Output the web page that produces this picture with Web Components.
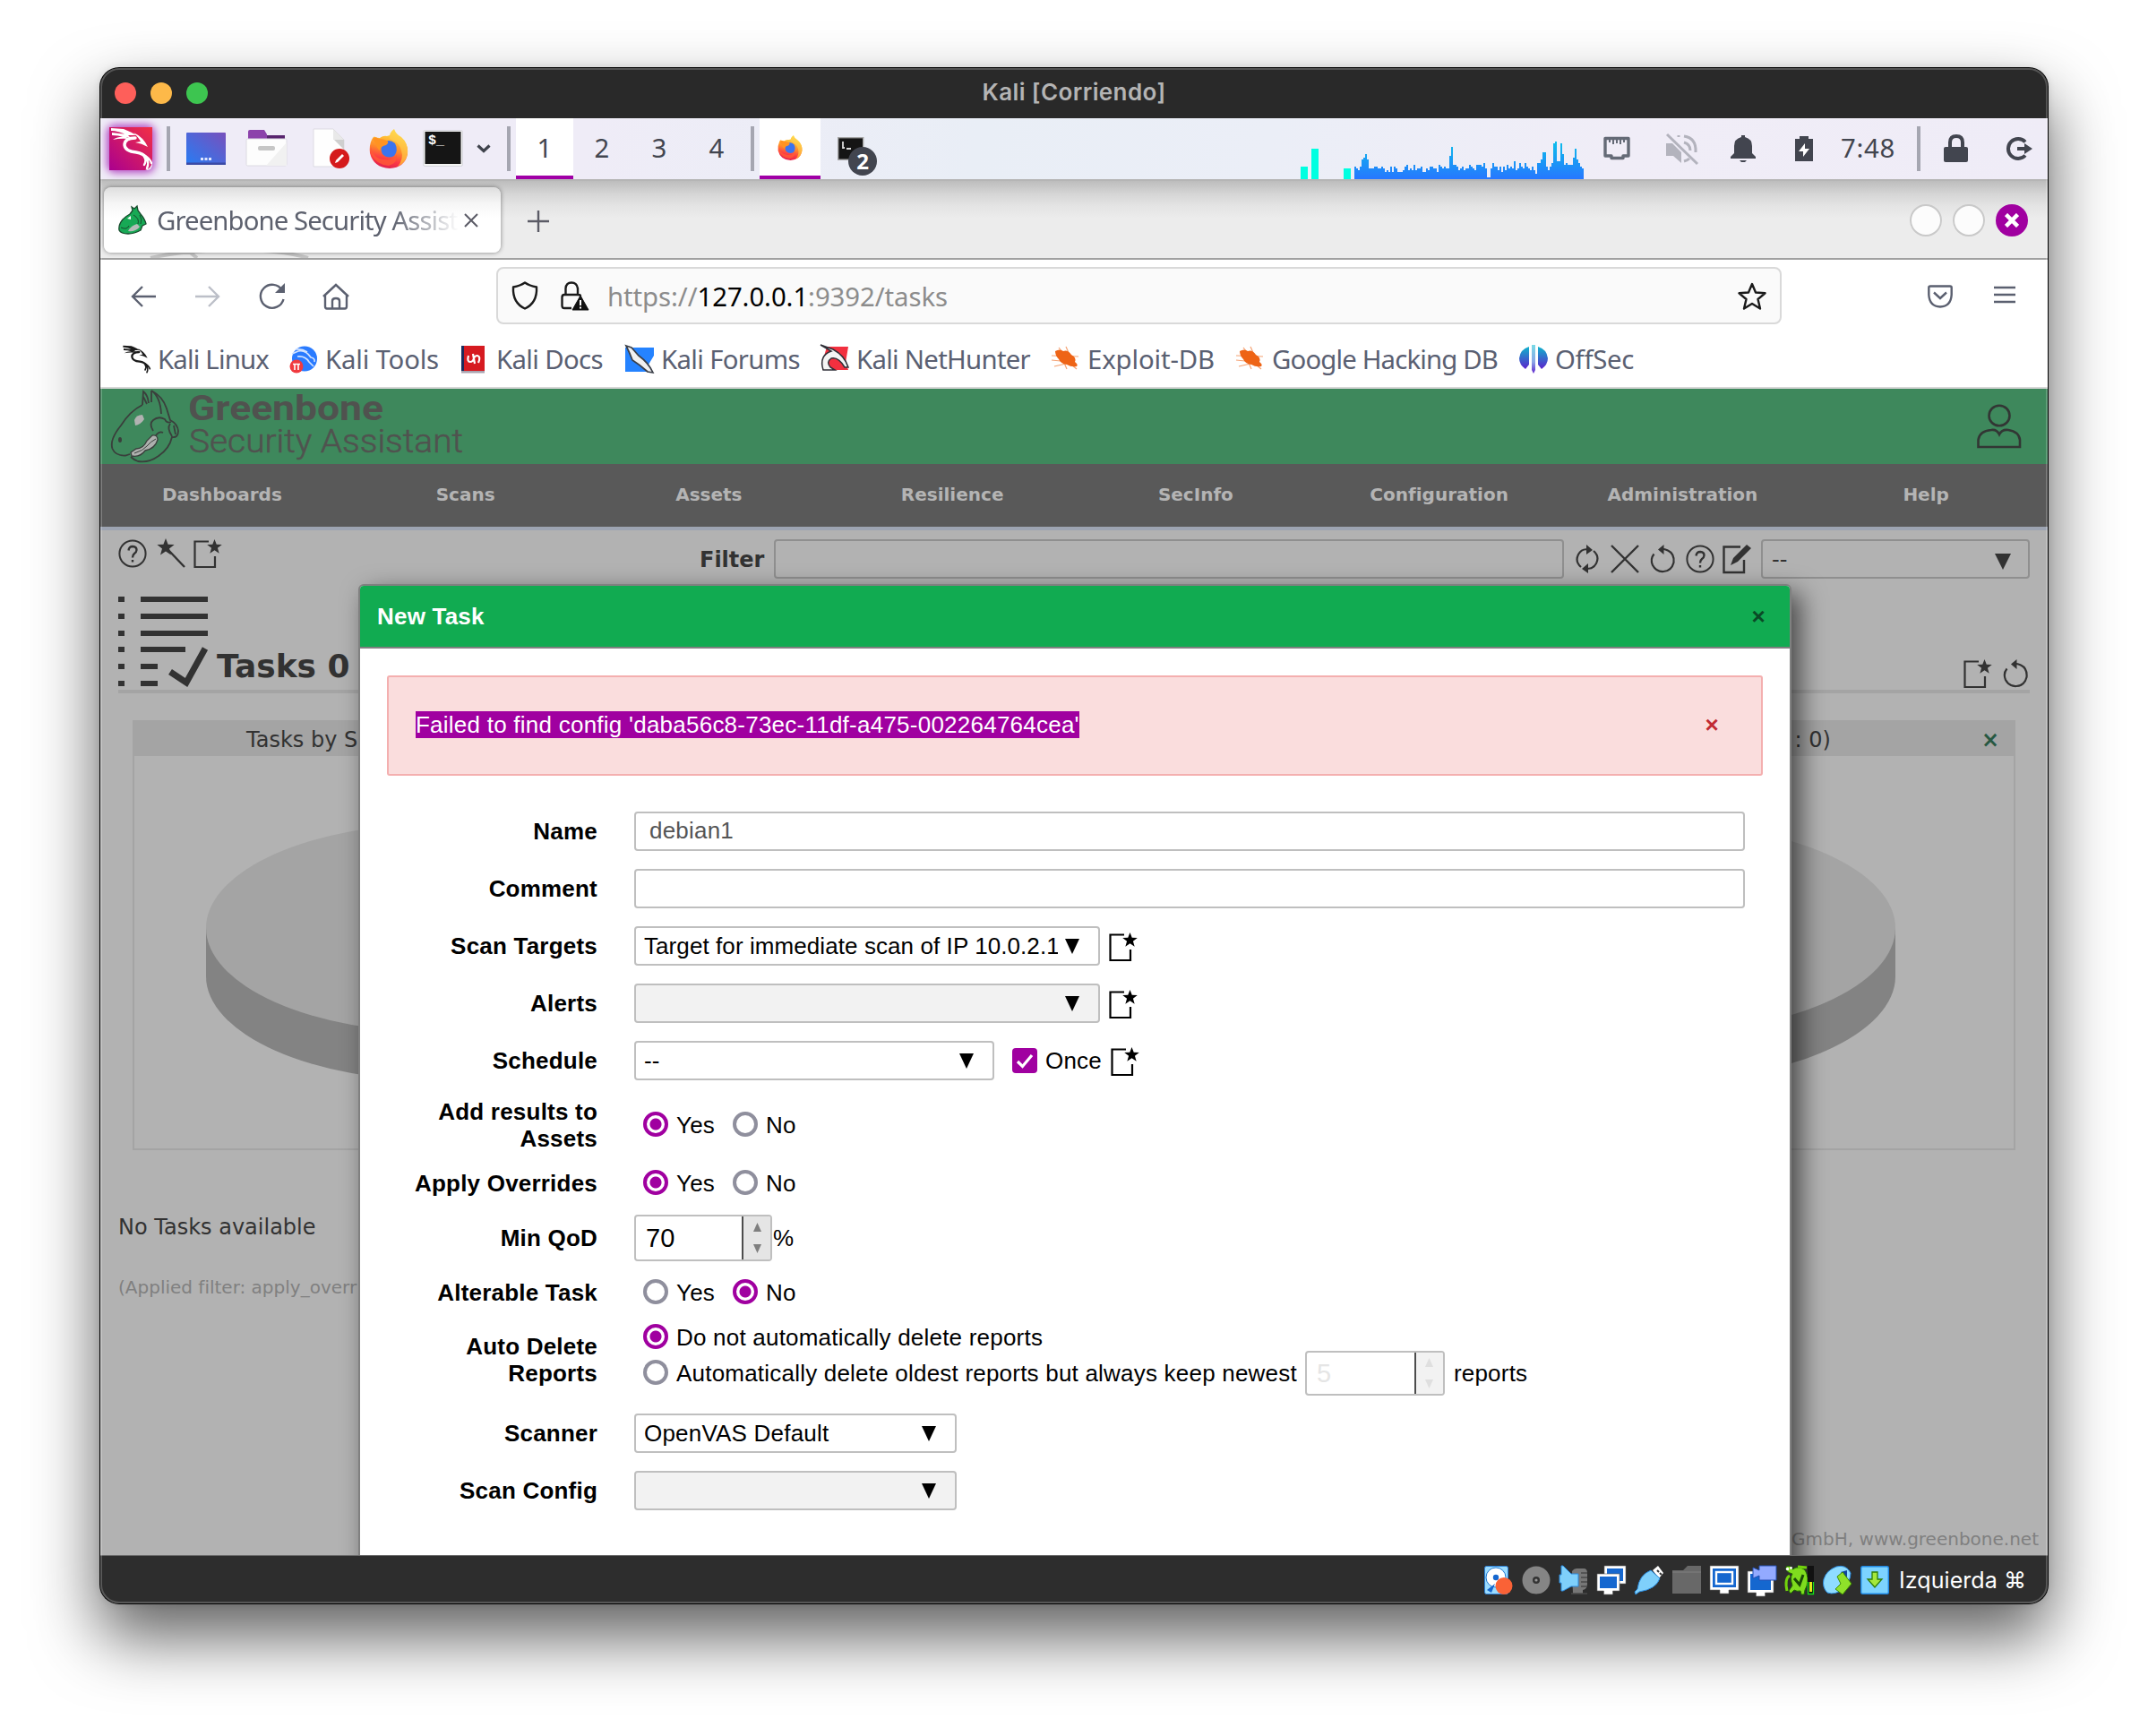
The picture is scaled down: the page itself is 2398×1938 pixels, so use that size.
<!DOCTYPE html>
<html lang="es">
<head>
<meta charset="utf-8">
<title>Kali [Corriendo]</title>
<style>
html,body{margin:0;background:#fff}
body{width:2398px;height:1938px;overflow:hidden;display:flex;flex-direction:column;align-items:flex-start;font-family:"Noto Sans",sans-serif}
vm-window{margin:76px 0 0 112px}
</style>
</head>
<body>
<vm-window>
  <fit-text slot="title" w="205">Kali [Corriendo]</fit-text>
  <kali-panel></kali-panel>
  <browser-tabs></browser-tabs>
  <browser-toolbar></browser-toolbar>
  <bookmarks-bar></bookmarks-bar>
  <gsa-header></gsa-header>
  <gsa-page></gsa-page>
  <vm-status slot="status"></vm-status>
</vm-window>
<script>
const define = (name, css, html, setup) => customElements.define(name, class extends HTMLElement {
  connectedCallback() {
    if (this.shadowRoot) return;
    const t = document.createElement('template');
    t.innerHTML = `<style>*,:host{box-sizing:border-box}${css}</style>${html}`;
    this.attachShadow({mode: 'open'}).appendChild(t.content.cloneNode(true));
    if (setup) setup(this, this.shadowRoot);
  }
});

const D = '#323232';
const dragon = c => `<g fill="${c}"><path d="M2 1L16 2Q26 6 30 9L20 9Q10 4 2 4zM3 6L20 8L24 12L16 11Q10 9 3 9zM4 14Q10 10 18 11L22 13Q12 12 4 14zM27 6Q38 11 43 22Q36 18 29 17L35 16Q33 12 27 6z"/></g><g fill="none" stroke="${c}" stroke-linecap="round"><path stroke-width="3.4" d="M29 12Q17 12 17 20Q18 27 30 28Q38 29 42 35"/><path stroke-width="2.4" d="M38 31Q45 34 47 40M41 34Q45 39 42 46M39 33Q42 37 39 42"/></g>`;
const firefox = `<defs><linearGradient id="a" x1=".7" y1="0" x2=".4" y2="1"><stop offset="0" stop-color="#ffd43a"/><stop offset=".45" stop-color="#ff8a2a"/><stop offset=".75" stop-color="#fc3a45"/><stop offset="1" stop-color="#e0204e"/></linearGradient><linearGradient id="b" x1=".6" y1="0" x2=".4" y2="1"><stop offset="0" stop-color="#ffdf4f"/><stop offset="1" stop-color="#ff9a35"/></linearGradient></defs><path fill="url(#a)" d="M3 12Q5 7 7 9Q9 10 12 10Q16 7 20 8Q30 4 38 12Q44 19 43 28Q40 43 23 44Q5 43 1 27Q0 18 3 12z"/><path fill="#3b74ee" d="M15 16Q22 10 29 16Q33 24 28 30Q21 34 15 28Q12 22 15 16z"/><path fill="url(#b)" d="M23 11Q22 4 28 0Q30 6 36 9Q44 16 43 27Q42 37 32 42Q39 33 36 24Q34 16 27 13z"/><path fill="#ff9322" d="M4 11Q8 8 11 11Q16 11 20 13Q23 15 19 18Q13 19 12 24Q8 21 8 17z"/><path fill="#ff5a36" d="M2 20Q5 33 16 34Q27 36 31 29Q32 38 22 41Q8 40 2 28z" opacity=".8"/>`;
const star = (x, y, s) => `<path transform="translate(${x} ${y}) scale(${s})" d="M0-10L2.6-3.2L9.6-3L4 1.4L6 8.4L0 4.4L-6 8.4L-4 1.4L-9.6-3L-2.6-3.2z"/>`;
const help = `<circle cx="16" cy="16" r="14.6" fill="none" stroke="currentColor" stroke-width="2"/><path fill="none" stroke="currentColor" stroke-width="2.4" d="M11.5 12.5Q12 8 16.2 8Q20.5 8.4 20.5 12Q20.3 14.5 18 16Q16 17.5 16 20.5M16 23V25.5"/>`;
const reset = `<path fill="none" stroke="currentColor" stroke-width="2.2" d="M4.5 10.5Q0 16 3 23Q7 30.500 15 30Q24 29.500 26.500 20Q27.500 10 20 6.500Q16 4.500 11 5"/><path fill="currentColor" d="M9 5.500L15.500 0V11z"/>`;
const screen = (x,y,w,h) => `<path fill="#fff" stroke="#666" stroke-width=".6" d="M${x} ${y}h${w}v${h}h-${w/2-5}v4h-10v-4h-${w/2-5}z"/><rect x="${x+3}" y="${y+3}" width="${w-6}" height="${h-6}" fill="#1567cf"/>`;
const ICONS = {
  kali: ['0 0 48 48', `<defs><linearGradient id="k" x1="1" y1="0" x2="0" y2="1"><stop offset="0" stop-color="#f22f45"/><stop offset="1" stop-color="#aa008f"/></linearGradient></defs><path d="M0 0H48V38Q47 46 40 48H0z" fill="url(#k)"/>${dragon('#fff')}`],
  dragon: ['0 0 48 48', dragon('#1b1b1b')],
  desk: ['0 0 44 36', `<defs><linearGradient id="d" x1="0" y1="1" x2="1" y2="0"><stop offset=".1" stop-color="#2f78ee"/><stop offset="1" stop-color="#7850bc"/></linearGradient></defs><rect width="44" height="36" rx="1" fill="url(#d)"/><rect y="33.500" width="44" height="2.500" fill="#3b4aa6"/><path d="M16 28h3v3h-3zM20.500 28h3v3h-3zM25 28h3v3h-3z" fill="#dfe6ff"/>`],
  files: ['0 0 46 42', `<path fill="#58246e" d="M2 6H43V16H2z"/><path fill="#8c42ab" d="M2 2Q2 0 4 0H20L23 5V12H2z"/><rect y="10" width="45" height="30" rx="1.500" fill="#fdfdfd" stroke="#dcdae2"/><path d="M22 40L45 14V40z" fill="#f1f1f1"/><rect x="13" y="18" width="19" height="5" rx="2" fill="#c6c6c6"/>`],
  doc: ['0 0 42 46', `<path d="M1 1H23L35 13V43H1z" fill="#fefefe" stroke="#dddbe3"/><path d="M23 1L35 13V24L23 12z" fill="#cfcfcf"/><path d="M23 1L35 13H23z" fill="#e9e9e9"/><circle cx="30" cy="34" r="11" fill="#d51a1c"/><path d="M25 39L26 36L33 29L35 31L28 38z" fill="#fff"/>`],
  firefox: ['0 0 44 44', firefox],
  term: ['0 0 46 42', `<rect x=".5" y=".5" width="44" height="40" rx="2" fill="#f2f2f2" stroke="#d5d5dc"/><rect x="2.500" y="2" width="40" height="36" fill="#151515"/>`],
  chev: ['0 0 16 10', `<path d="M1.500 1.500L8 7.500L14.500 1.500" fill="none" stroke="#3f434c" stroke-width="3.200"/>`],
  term2: ['0 0 30 26', `<rect x=".7" y=".7" width="28" height="24.500" fill="#151515" stroke="#a5a5a5" stroke-width="1.400"/><path d="M6 5V12H8M10 13H15" stroke="#ddd" stroke-width="1.800" fill="none"/>`],
  eth: ['0 0 30 26', `<path d="M2 2.500H28V22H22V24.500H9V22H2z" fill="none" stroke="#646a76" stroke-width="3.400" stroke-linejoin="round"/><path d="M7 4V7M11 4V9M15 4V8M19 4V9M23 4V7" stroke="#646a76" stroke-width="2"/>`],
  mute: ['0 0 36 36', `<g fill="#b3b3bd"><path d="M0 12H7L17 22V34L8 26H0z"/></g><g fill="none" stroke="#b3b3bd" stroke-width="3"><path d="M1 2L35 35"/><path d="M20 4Q34 6 33 22M20 11Q27 13 27 20M14 3V5M20 32Q24 31 26 29"/></g>`],
  bell: ['0 0 28 30', `<path fill="#42454f" d="M12 0H16V2Q24 4 24 12V20L28 24V26H0V24L4 20V12Q4 4 12 2zM10 28H18L16 30H12z"/>`],
  batt: ['0 0 20 28', `<path fill="#42454f" d="M5 0H15V3H20V28H0V3H5z"/><path fill="#fff" d="M11 8L4 17H9V23L16 14H11z"/>`],
  lock: ['0 0 28 32', `<path d="M7 15V9Q7 2 14 2Q21 2 21 9V15" fill="none" stroke="#42454f" stroke-width="4"/><rect y="14" width="27" height="17" rx="2" fill="#42454f"/>`],
  logout: ['0 0 30 26', `<path d="M21 5.500A11 11 0 1 0 21 20.500" fill="none" stroke="#42454f" stroke-width="4"/><path d="M12 11H20V7L29 13L20 19V15H12z" fill="#42454f"/>`],
  fav: ['0 0 32 32', `<path fill="#17a955" stroke="#174a2c" stroke-width="1.300" d="M13 9L16 5L15 1L18 3L21 0L22 5L25 9Q30 15 31 20L27 22L25 27Q18 31 11 31Q3 31 1 27Q0 21 5 15Q9 11 13 9z"/><path d="M11 28Q14 22 21 20L24 23Q20 29 11 28z" fill="#b5bcb8"/><path d="M10 14L14 11L14 15z" fill="#fff"/><path d="M17 10Q24 14 22 20M3 24Q10 27 12 22M24 10Q27 15 25 20" fill="none" stroke="#174a2c"/>`],
  x: ['0 0 16 16', `<path d="M1 1L15 15M15 1L1 15" stroke="#5b5b66" stroke-width="2"/>`],
  plus: ['0 0 24 24', `<path d="M12 0V24M0 12H24" stroke="#5b5b66" stroke-width="2.400"/>`],
  back: ['0 0 28 24', `<path d="M28 12H2M13 1L2 12L13 23" fill="none" stroke="#5b6070" stroke-width="2.400"/>`],
  fwd: ['0 0 28 24', `<path d="M0 12H26M15 1L26 12L15 23" fill="none" stroke="#bcbfc8" stroke-width="2.400"/>`],
  reload: ['0 0 30 30', `<path d="M26 8A13 13 0 1 0 27.500 18" fill="none" stroke="#5b6070" stroke-width="2.400"/><path d="M29 0V11H18z" fill="#5b6070"/>`],
  home: ['0 0 30 30', `<path d="M3 13V26Q3 28.500 5 28.500H25Q27 28.500 27 26V13M1 15L15 2L29 15M11 28V20Q11 17 15 17Q19 17 19 20V28" fill="none" stroke="#5b6070" stroke-width="2.400"/>`],
  shield: ['0 0 30 32', `<path d="M15 1.500Q20 5 28 6.500Q29 24 15 30.500Q1 24 2 6.500Q10 5 15 1.500z" fill="none" stroke="#1a1a1a" stroke-width="2.400" stroke-linejoin="round"/>`],
  warnlock: ['0 0 32 32', `<path d="M12 30H4Q1.500 30 1.500 27V18Q1.500 15 4 15H20Q22 15 22 17M5.500 15V8Q6 1.500 12 1.500Q18 1.500 19 8V15" fill="none" stroke="#1a1a1a" stroke-width="2.400"/><path d="M22 16L31 32H13z" fill="#111" stroke="#111" stroke-linejoin="round"/><path d="M22 21V27M22 28.500V30.500" stroke="#fff" stroke-width="2"/>`],
  star: ['0 0 32 32', `<path d="M16 2L20 11.500L30.500 12.300L22.500 19L25 29.500L16 24L7 29.500L9.500 19L1.500 12.300L12 11.500z" fill="none" stroke="#1a1a1a" stroke-width="2.400" stroke-linejoin="round"/>`],
  pocket: ['0 0 28 26', `<path d="M3 1.500H25Q26.700 1.500 26.700 3V11Q26 24 14 24.500Q2 24 1.300 11V3Q1.300 1.500 3 1.500zM7 8.500L14 15L21 8.500" fill="none" stroke="#5b6070" stroke-width="2.400"/>`],
  burger: ['0 0 24 20', `<path d="M0 2H24M0 10H24M0 18H24" stroke="#5b6070" stroke-width="2.400"/>`],
  tools: ['0 0 32 32', `<circle cx="17" cy="15.500" r="14" fill="#2a7bff"/><path d="M3 10L10 7Q18 5 24 14Q29 15 28 19M7 5Q14 4 20 8M9 13Q18 12 22 19L27 24" stroke="#d3e3ff" stroke-width="1.700" fill="none"/><circle cx="8" cy="24" r="7.500" fill="#f03a3f"/><path d="M4 21.500H12M6 21.500V28M10 21.500V28" stroke="#fff" stroke-width="1.600"/>`],
  docs: ['0 0 32 32', `<rect x="1" y="1" width="26" height="30" fill="#d61a20"/><rect x="1" y="1" width="3" height="30" fill="#1c2c5c"/><rect x="1" y="29" width="26" height="2.500" fill="#a9a4b0"/><path d="M9 12Q7 19 11 19Q14 19 15 15Q16 12 19 12Q23 13 20 20M14 10L16 21" fill="none" stroke="#fff" stroke-width="2.200"/>`],
  forums: ['0 0 32 32', `<path d="M0 3H32V12L26 22L30 30H0z" fill="#2583ff"/><path d="M1 1L7 3L15 12Q26 20 31 31L25 30Q16 22 8 17Q5 9 1 1z" fill="#f1f1f1" stroke="#3a3f49" stroke-width="1.700"/>`],
  nethunter: ['0 0 32 32', `<path d="M7 2H31L28 20L31 28H2V20z" fill="#f2303f"/><path d="M0 0L14 5Q27 12 31 25L27 25Q20 13 12 15Q6 19 11 25L16 28H3Q-2 12 12 7z" fill="#f4f4f4" stroke="#303038" stroke-width="1.500"/>`],
  bug: ['0 0 32 32', `<path d="M4 7Q9 4 13 7Q18 5 22 11Q28 14 26 19Q30 22 28 24Q22 25 17 22Q10 21 8 16Q4 12 4 7z" fill="#ee6416"/><path d="M0 12L30 13M8 3L12 8M16 2L20 11M3 24L16 21M14 20L17 27M22 22L28 27M0 17L10 18" stroke="#ee6416" stroke-width="1.200" opacity=".6"/>`],
  offsec: ['0 0 32 32', `<defs><linearGradient id="o" x1="0" y1="0" x2="0" y2="1"><stop offset="0" stop-color="#0fb3cc"/><stop offset="1" stop-color="#5c22cc"/></linearGradient><linearGradient id="p" x1="0" y1="0" x2="0" y2="1"><stop offset="0" stop-color="#79dbe6"/><stop offset=".6" stop-color="#8ba4e6"/><stop offset="1" stop-color="#5c22cc"/></linearGradient></defs><path d="M11 2V22L7 27Q0 22 0 15Q1 5 11 2zM21 2V22L25 27Q32 22 32 15Q31 5 21 2z" fill="url(#o)"/><path d="M14 0H18V28L16 32L14 28z" fill="url(#p)"/>`],
  gb: ['0 0 78 82', `<g fill="none" stroke="#3a3f3c" stroke-width="1.800"><path d="M35 17Q21 24 11 40Q-2 56 1.500 66Q5 74 16 73.500L21 72"/><path d="M35 17L36 2Q41 6 42 15M36 8L40 16M45 1Q55 8 56 27M45 1V14M45 1Q58 8 62 21L66 34Q74 38 75 46Q75 54 68 53Q65 66 53 74Q42 82 30 80Q25 78 22 75"/><path d="M47 46Q42 38 47 34Q53 29 60 33Q62 38 67 36M66 38Q62 43 68 52M70 40L72 50M50 51Q54 46 58 48"/></g><path d="M22 70L28 66Q36 66 40 57L46 51Q52 50 52 56Q49 66 38 68Q32 76 23 74z" fill="#aeb0ae" stroke="#3a3f3c" stroke-width="1.300"/><path d="M26 71Q36 68 40 63T50 55" fill="none" stroke="#3a3f3c"/><path d="M26 34Q28 28 35 28L37 33Q33 39 27 40z" fill="#b2b2b2"/><ellipse cx="10" cy="56" rx="2" ry="3" fill="#3a3f3c"/>`],
  user: ['0 0 50 50', `<g fill="none" stroke="#323634" stroke-width="2.600"><ellipse cx="25" cy="13" rx="11.500" ry="11.300"/><path d="M1.500 48V40Q3 30 16 29Q22 28 25 34Q28 28 35 29Q47 31 48 40V48z"/></g>`],
  help: ['0 0 32 32', help],
  wand: ['0 0 32 32', `<g fill="currentColor">${star(10,9,1)}</g><path d="M12 11L31 31" stroke="currentColor" stroke-width="2.400"/>`],
  new: ['0 0 32 32', `<path d="M17 2.500H1.500V31H24V19" fill="none" stroke="currentColor" stroke-width="2.200"/><g fill="currentColor">${star(23.5,8.5,.86)}</g>`],
  refresh: ['0 0 26 32', `<path fill="none" stroke="currentColor" stroke-width="2.200" d="M6 25Q-1 19 3 11Q7 4 14 5.500M20 7Q27 13 23 21Q19 28 12 26.500"/><path fill="currentColor" d="M12 0L19 6L12 11zM14 21L7 27L14 32z"/>`],
  cross: ['0 0 32 32', `<path d="M1 1L31 31M31 1L1 31" stroke="currentColor" stroke-width="2.400"/>`],
  reset: ['0 0 28 32', reset],
  edit: ['0 0 32 32', `<path d="M20 2.500H1.500V31H24V17" fill="none" stroke="currentColor" stroke-width="2.400"/><path d="M9 23L12 15L27 0L32 4L17 19z" fill="currentColor"/>`],
  list: ['0 0 100 102', `<path fill="#323232" d="M0 0h7v6H0zM25 0h75v6H25zM0 19h7v6H0zM25 19h75v6H25zM0 38h7v6H0zM25 38h75v6H25zM0 56h7v6H0zM25 56h50v6H25zM0 75h7v6H0zM25 75h19v6H25zM0 94h7v6H0zM25 94h19v6H25z"/><path d="M58 84L76 96L97 58" fill="none" stroke="#323232" stroke-width="7"/>`],
  pie: ['0 0 526 290', `<path d="M0 117V171A263 117 0 0 0 526 171V117z" fill="#838383"/><ellipse cx="263" cy="117" rx="263" ry="117" fill="#a4a4a4"/>`],
  check: ['0 0 28 28', `<rect width="28" height="28" rx="4" fill="#a000a0"/><path d="M6 15L11.500 20.500L22 8" fill="none" stroke="#fff" stroke-width="3.200"/>`],
  down: ['0 0 16 18', `<path d="M0 0H16L8 18z" fill="currentColor"/>`],
  up: ['0 0 16 18', `<path d="M0 18H16L8 0z" fill="currentColor"/>`],
  s1: ['0 0 32 32', `<rect x=".5" y=".5" width="26" height="31" rx="2" fill="#9bdcff" stroke="#2a7fd6"/><circle cx="13" cy="13" r="11" fill="#fff" stroke="#1e78d2"/><circle cx="13" cy="13" r="3.200" fill="#1567cf"/><path d="M3 27L12 20L8 30z" fill="#1567cf"/><circle cx="22" cy="22.500" r="9.500" fill="#fa6236"/>`],
  s2: ['0 0 32 32', `<circle cx="16" cy="16" r="15.500" fill="#858585"/><circle cx="16" cy="16" r="4" fill="#333"/><circle cx="16" cy="16" r="1.600" fill="#999"/>`],
  s3: ['0 0 32 32', `<path d="M14 6Q16 3 19 3H27Q31 3 31 8V20Q31 26 26 27V31H15z" fill="#777"/><path d="M24 8H31M24 13H31M24 18H31M24 23H31M13 31H31" stroke="#4a4a4a" stroke-width="1.500"/><path d="M2 0H4L13 9H21V23H13L4 28H2V19H0V10H2z" fill="#7fd0fb" stroke="#2a8ade"/>`],
  s4: ['0 0 32 32', screen(8,0,24,20) + screen(0,9,25,19)],
  s5: ['0 0 32 32', `<path d="M20 5L26 0L32 8L27 14z" fill="#fff"/><path d="M25 5l2 2M28 8l2 2" stroke="#333" stroke-width="2"/><path d="M18 5L28 14Q24 26 5 29L1 32L0 29L3 26Q5 10 18 5z" fill="#7fd0fb" stroke="#2a8ade"/>`],
  s6: ['0 0 32 32', `<path d="M0 5H12L17 0H32V31H0z" fill="#686868"/><path d="M0 7H32" stroke="#808080"/>`],
  s7: ['0 0 32 32', screen(0,0,32,27) + `<rect x="7" y="7" width="18" height="13" fill="#1567cf" stroke="#fff" stroke-width="2.400"/>`],
  s8: ['0 0 32 32', screen(0,6,29,24) + `<path d="M6 2L13 5V0H32V16H13V11L6 14z" fill="#93aaff" stroke="#2450b4"/>`],
  s9: ['0 0 32 32', `<path d="M1 1Q7 -1 8 4L12 2Q22 1 24 9Q27 18 22 27L21 32H18L17 28Q13 29 10 27L6 31L4 28L8 22Q5 13 8 9Q0 7 1 1z" fill="#7fdc1e" stroke="#1f6a00"/><circle cx="2.500" cy="3.500" r="1.700" fill="#fff"/><circle cx="6.500" cy="2.500" r="1.400" fill="#fff"/><path d="M5 11Q-1 14 2 28M14 1L24 2" stroke="#72d30c" stroke-width="3" fill="none"/><path d="M10 14L16 21L20 10" stroke="#1a4a06" stroke-width="3" fill="none"/><rect x="25" y="0" width="7" height="31.500" fill="#111"/><path d="M25.500 18V31.500H31.500V18" fill="none" stroke="#16e016" stroke-width="1.300"/><rect x="27" y="18" width="3" height="11" fill="#e5e619"/>`],
  s10: ['0 0 32 32', `<path d="M15 1Q26 -2 31 8Q31 18 22 26Q14 33 5 30Q-1 24 1 15Q4 5 15 1z" fill="#8fdcff" stroke="#2a8ade"/><path d="M20 7L27 5V14z" fill="#12459c"/><path d="M16 12L22 7L32 20L22 32L14 26L20 20z" fill="#8fe12a" stroke="#3c8a00"/>`],
  s11: ['0 0 32 32', `<rect x=".7" y=".7" width="30.600" height="30.600" rx="1.500" fill="#7cd3ff" stroke="#1e86e0" stroke-width="1.400"/><path d="M13 7H19V15H24L16 24L8 15H13z" fill="#a5e83c" stroke="#2e7d08" stroke-width="1.300"/>`]
};

define('vm-window', `
:host{display:flex;flex-direction:column;position:relative;width:2174px;height:1714px;border-radius:21px;background:#2d2d2d;box-shadow:0 0 0 1px #000,0 0 10px rgba(0,0,0,.12),0 36px 72px 2px rgba(0,0,0,.62)}
.clip{display:flex;flex-direction:column;flex:1;border-radius:21px;overflow:hidden}
.bar{height:56px;flex:none;display:grid;grid-template-columns:1fr auto 1fr;align-items:center;background:#292929;font:600 26px/34px Inter,sans-serif;color:#b4b4b4}
.bar slot{display:block;margin-top:-2px}
.l{display:flex;gap:16px;padding-left:16px}.l i{width:24px;height:24px;border-radius:50%;background:#fe5f5a}
.l i+i{background:#fdb949}.l i+i+i{background:#3dc550}
.rim{position:absolute;inset:0;border-radius:21px;box-shadow:inset 0 0 0 2px rgba(255,255,255,.2);pointer-events:none;z-index:9}
.vm{height:1604px;display:flex;flex-direction:column;overflow:hidden}`,
`<div class="clip"><div class="bar"><div class="l"><i></i><i></i><i></i></div><slot name="title"></slot><span></span></div><div class="vm"><slot></slot></div><slot name="status"></slot></div><div class="rim"></div>`);

const bars = [7,6,5,7,11,12,14,11,6,6,6,7,7,6,6,7,6,4,5,4,7,4,7,6,4,4,4,5,7,8,5,6,5,8,5,6,6,7,4,4,6,5,7,7,6,6,4,8,7,6,7,6,6,13,18,8,8,7,5,6,7,5,6,6,8,7,6,5,8,8,8,7,9,6,1,1,6,9,7,7,5,7,4,7,5,8,6,7,6,10,5,6,9,7,6,9,7,6,5,7,5,3,9,9,11,15,15,7,5,7,9,20,21,10,10,20,14,8,9,8,8,8,12,17,11,9,7,6];
define('kali-panel', `
:host{display:flex;height:68px;flex:none;align-items:center;background:linear-gradient(100deg,#efecf7 0,#efecf7 25%,#e9eef6 45%,#ebeef7 60%,#f0edf7 78%,#efecf7);font:29.33px/40px "Noto Sans",sans-serif;color:#42454f}
ui-icon{flex:none}
.sep{width:4px;height:50px;background:#a5a6b1;flex:none}
.ws{width:64px;height:68px;display:flex;align-items:center;justify-content:center;flex:none;padding-bottom:2px}
.on{background:#fff;border-bottom:4px solid #a000a6;padding-top:2px;padding-bottom:0}
.glow{margin-left:10px;border-radius:6px;box-shadow:0 0 8px 3px #b44cc4}
.bar{display:flex;align-items:flex-end;height:68px}
.bar i{display:block}
.t{position:relative;width:29px;height:26px;margin-left:19px;margin-top:-1px}
.t b{position:absolute;left:12px;top:11px;width:32px;height:32px;border-radius:50%;background:#42454f;color:#fff;font-size:24px;line-height:32px;text-align:center}
.term{position:relative;display:flex;margin-left:16px}
.term span{position:absolute;left:6px;top:4px;color:#fff;font:bold 15px/18px "Liberation Mono",monospace}`,
`<ui-icon class="glow" name="kali" w="48" h="48"></ui-icon><div class="sep" style="margin-left:16px"></div>
<ui-icon name="desk" w="44" h="36" style="margin-left:18px"></ui-icon>
<ui-icon name="files" w="46" h="42" style="margin-left:23px"></ui-icon>
<ui-icon name="doc" w="42" h="46" style="margin-left:28px"></ui-icon>
<ui-icon name="firefox" w="44" h="44" style="margin-left:21px"></ui-icon>
<div class="term"><ui-icon name="term" w="46" h="42"></ui-icon><span>$_</span></div>
<ui-icon name="chev" w="16" h="10" style="margin-left:14px"></ui-icon>
<div class="sep" style="margin-left:18px"></div>
<div class="ws on" style="margin-left:6px">1</div><div class="ws">2</div><div class="ws">3</div><div class="ws">4</div>
<div class="sep" style="margin-left:6px"></div>
<div class="ws on" style="margin-left:6px;width:68px"><ui-icon name="firefox" w="28" h="28"></ui-icon></div>
<div class="t"><ui-icon name="term2" w="30" h="26"></ui-icon><b>2</b></div>
<div class="bar" style="margin-left:488px"><i style="width:8px;height:14px;background:#00ffe1"></i><i style="width:8px;height:34px;background:#00ffe1;margin-left:4px"></i><i style="width:8px;height:12px;background:#00ffe1;margin-left:28px"></i></div>
<svg id="g" width="256" height="68" style="margin-left:4px;flex:none" shape-rendering="crispEdges"><defs><linearGradient id="c" gradientUnits="userSpaceOnUse" x1="0" y1="20" x2="0" y2="68"><stop offset="0" stop-color="#08c8e8"/><stop offset="1" stop-color="#2777ff"/></linearGradient></defs><path fill="url(#c)"></path></svg>
<ui-icon name="eth" w="30" h="26" style="margin-left:22px;margin-top:-3px"></ui-icon>
<ui-icon name="mute" w="36" h="36" style="margin-left:40px"></ui-icon>
<ui-icon name="bell" w="28" h="30" style="margin-left:36px"></ui-icon>
<ui-icon name="batt" w="20" h="28" style="margin-left:44px"></ui-icon>
<fit-text w="61" style="margin:-2px 0 0 31px">7:48</fit-text>
<div class="sep" style="margin-left:24px"></div>
<ui-icon name="lock" w="28" h="32" style="margin-left:26px"></ui-icon>
<ui-icon name="logout" w="30" h="26" style="margin-left:42px"></ui-icon>`,
(h, r) => r.querySelector('#g path').setAttribute('d', bars.map((b, i) => `M${i*2} 68v-${b*2}h2v${b*2}z`).join('')));

define('browser-tabs', `
:host{display:flex;height:90px;flex:none;align-items:center;border-top:2px solid #b5b5b5;border-bottom:2px solid #a0a0a0;background:linear-gradient(#bdbdbd 0,#d6d6d6 15px,#e4e4e4 28px,#ececec 42px);position:relative}
.tab{width:443px;height:73px;margin:1px 1px 0 4px;border-radius:8px;background:linear-gradient(#dedede,#f6f6f6 18px,#fff 34px);box-shadow:0 0 5px rgba(0,0,0,.45);display:flex;align-items:center;padding-left:16px;font:29.33px/40px "Noto Sans",sans-serif;color:#5d616e;position:relative}
.name{width:337px;margin-left:11px;white-space:nowrap;-webkit-mask:linear-gradient(90deg,#000 78%,transparent 100%);mask:linear-gradient(90deg,#000 78%,transparent 100%)}
.c{width:36px;height:36px;border-radius:50%;background:#fcfcfc;border:2px solid #c9c9c9;margin:2px 12px 0 0}
.k{width:36px;height:36px;border-radius:50%;background:#a000a0;display:flex;align-items:center;justify-content:center;margin:2px 22px 0 0}
.deco{position:absolute;left:52px;top:78px}`,
`<svg class="deco" width="200" height="8"><path d="M4 8Q30 2 66 0M46 0L56 8M130 0Q160 2 180 8" fill="none" stroke="#c4c4c4" stroke-width="4"/></svg>
<div class="tab"><ui-icon name="fav" w="32" h="32"></ui-icon><div class="name"><fit-text w="336">Greenbone Security Assist</fit-text></div><ui-icon name="x" w="16" h="16" style="margin-left:6px"></ui-icon></div>
<ui-icon name="plus" w="24" h="24" style="margin:3px auto 0 29px"></ui-icon><i class="c"></i><i class="c"></i><div class="k"><svg width="16" height="16"><path d="M1.500 1.500L14.500 14.500M14.500 1.500L1.500 14.500" stroke="#fff" stroke-width="4.500"/></svg></div>`);

define('browser-toolbar', `
:host{display:flex;align-items:center;height:80px;flex:none;background:#fff;padding-left:34px}
:host>ui-icon,ui-icon{margin-top:1px}
.url{width:1435px;height:64px;border:2px solid #d9d9d9;border-radius:8px;background:#fafafa;display:flex;align-items:center;padding:0 15px 0 15px;margin-left:164px;font:29.33px/40px "Noto Sans",sans-serif;color:#8c8c8c}
b{font-weight:400;color:#000}`,
`<ui-icon name="back" w="28" h="24"></ui-icon><ui-icon name="fwd" w="28" h="24" style="margin-left:44px"></ui-icon><ui-icon name="reload" w="30" h="30" style="margin-left:43px"></ui-icon><ui-icon name="home" w="30" h="30" style="margin-left:41px"></ui-icon>
<div class="url"><ui-icon name="shield" w="30" h="32" style="margin-top:-1px"></ui-icon><ui-icon name="warnlock" w="32" h="32" style="margin:-1px 0 0 25px"></ui-icon><fit-text w="380" style="margin-left:20px;margin-right:auto;margin-top:1px">https://<b>127.0.0.1</b>:9392/tasks</fit-text><ui-icon name="star" w="32" h="32"></ui-icon></div>
<ui-icon name="pocket" w="28" h="26" style="margin-left:163px"></ui-icon><ui-icon name="burger" w="24" h="20" style="margin-left:46px;margin-top:-3px"></ui-icon>`);

define('bookmarks-bar', `
:host{display:flex;height:64px;flex:none;align-items:center;background:#fff;border-bottom:2px solid #d6d6d6;padding-left:24px;font:29.33px/40px "Noto Sans",sans-serif;color:#5a6072;white-space:nowrap}
div{display:flex;gap:8px;align-items:center;flex:none}`,
[['dragon','Kali Linux',124,187],['tools','Kali Tools',127,191],['docs','Kali Docs',119,184],['forums','Kali Forums',155,218],['nethunter','Kali NetHunter',194,258],['bug','Exploit-DB',142,206],['bug','Google Hacking DB',252,316],['offsec','OffSec',88,150]]
.map(([i,t,w,c]) => `<div style="width:${c}px"><ui-icon name="${i}" w="32" h="32"></ui-icon><fit-text w="${w}">${t}</fit-text></div>`).join(''));

define('gsa-header', `
:host{display:block;flex:none}
.h{height:84px;background:#3e885c;display:flex;align-items:center;padding:0 29px 0 12px}
.t{margin:0 auto 0 9px}
nav{display:grid;grid-template-columns:repeat(8,1fr);height:74px;background:#595959;border-bottom:4px solid #9da4b2;align-items:center;justify-items:center;font:bold 20px/30px "DejaVu Sans",sans-serif;color:#b4b4b4;padding:3px 0 5px}`,
`<div class="h"><ui-icon name="gb" w="78" h="82"></ui-icon>
<svg class="t" width="330" height="84"><g fill="#50524f" font-family="Roboto,sans-serif"><text x="-1" y="35" font-size="39" font-weight="700" textLength="218" lengthAdjust="spacingAndGlyphs">Greenbone</text><text x="0" y="71" font-size="36" font-weight="300" textLength="306" lengthAdjust="spacingAndGlyphs" stroke="#50524f" stroke-width=".5">Security Assistant</text></g></svg>
<ui-icon name="user" w="50" h="50"></ui-icon></div>
<nav><span>Dashboards</span><span>Scans</span><span>Assets</span><span>Resilience</span><span>SecInfo</span><span>Configuration</span><span>Administration</span><span>Help</span></nav>`);

define('gsa-page', `
:host{display:flex;flex-direction:column;position:relative;flex:1;background:#b2b2b2;color:${D};font:24px/30px "DejaVu Sans",sans-serif;padding:10px 20px 0;white-space:nowrap}
.top{display:flex;height:44px;align-items:flex-start}
.top .f{align-self:center;font-weight:bold;width:75px;margin:2px 0 0 533px;flex:none}
.in{width:882px;height:44px;border:2px solid #8f8f8f;border-radius:4px;margin-left:8px;flex:none}
.sel{width:300px;height:44px;border:2px solid #8f8f8f;border-radius:4px;display:flex;align-items:center;justify-content:space-between;padding:2px 19px 0 10px;flex:none}
.tools{display:flex;align-items:center;height:44px;width:220px;padding-left:13px;flex:none}
.head{display:flex;height:108px;margin-top:20px;border-bottom:4px solid #a4a4a4;align-items:flex-start}
.head h2{font:bold 36px/44px "DejaVu Sans",sans-serif;margin:56px auto 0 10px}
.cards{display:flex;margin:30px 16px 0 16px;height:480px;gap:10px}
.card{flex:1;border:2px solid #a4a4a4;border-width:0 2px 2px 2px;display:flex;flex-direction:column}
.ch{height:40px;background:#a4a4a4;display:flex;align-items:center;padding-top:3px}
p{margin:0}
footer{color:#808080;font-size:20px;position:absolute;right:10px;bottom:3px}
task-dialog{position:absolute;left:288px;top:60px}`,
`<div class="top"><ui-icon name="help" w="32" h="32"></ui-icon><ui-icon name="wand" w="32" h="32" style="margin-left:11px"></ui-icon><ui-icon name="new" w="32" h="32" style="margin-left:9px"></ui-icon>
<span class="f">Filter</span><div class="in"></div>
<div class="tools"><ui-icon name="refresh" w="26" h="32"></ui-icon><ui-icon name="cross" w="32" h="32" style="margin-left:13px"></ui-icon><ui-icon name="reset" w="28" h="32" style="margin-left:12px"></ui-icon><ui-icon name="help" w="32" h="32" style="margin-left:12px"></ui-icon><ui-icon name="edit" w="32" h="32" style="margin-left:9px"></ui-icon></div>
<div class="sel"><span>--</span><ui-icon name="down" w="18" h="18" style="margin-top:3px"></ui-icon></div></div>
<div class="head"><ui-icon name="list" w="100" h="102"></ui-icon><h2>Tasks 0</h2><ui-icon name="new" w="32" h="32" style="margin-top:70px"></ui-icon><ui-icon name="reset" w="28" h="32" style="margin:70px 2px 0 12px"></ui-icon></div>
<div class="cards"><div class="card"><div class="ch"><span style="margin-left:125px">Tasks by S</span></div><ui-icon name="pie" w="526" h="290" style="margin:75px 0 0 80px"></ui-icon></div><div class="card"><div class="ch"></div></div>
<div class="card"><div class="ch" style="justify-content:flex-end"><span>: 0)</span><b style="color:#275842;margin:0 16px 0 168px">×</b></div><ui-icon name="pie" w="526" h="290" style="margin:75px 132px 0 auto"></ui-icon></div></div>
<p style="margin-top:71px">No Tasks available</p><p style="margin-top:37px;font-size:20px;color:#808080">(Applied filter: apply_overr</p>
<footer>GmbH, www.greenbone.net</footer><task-dialog></task-dialog>`);

define('task-dialog', `
:host{display:flex;flex-direction:column;width:1600px;height:1200px;border:2px solid #808080;border-radius:6px 6px 0 0;background:#fff;box-shadow:10px 10px 28px rgba(0,0,0,.6);font:26px/30px "Liberation Sans",Arial,sans-serif;letter-spacing:.21px;color:#000;overflow:hidden}
.h{height:70px;flex:none;background:#11ab51;border-bottom:2px solid #808080;color:#fff;font-weight:bold;display:flex;align-items:center;justify-content:space-between;padding:0 27px 1px 19px}
.h b{color:#0a4a26}
.err{margin:30px 30px 0;height:112px;flex:none;border:2px solid #f4afaf;border-radius:3px;background:#fadddd;display:flex;align-items:center;justify-content:space-between;padding:0 47px 2px 30px}
.err span{background:#a000a0;color:#fff;letter-spacing:.24px}
.err b{color:#c12a33}
form{display:flex;flex-direction:column;gap:20px;margin:40px 50px 0 30px}
.c{display:flex;flex-direction:column}.r{display:flex;align-items:center}
.i{height:44px;flex:1;border:2px solid #bfbfbf;border-radius:4px;padding:4px 15px;color:#555}`,
`<div class="h">New Task<b>×</b></div><div class="err"><span>Failed to find config 'daba56c8-73ec-11df-a475-002264764cea'</span><b>×</b></div>
<form>
<form-row label="Name" h="44"><div class="i">debian1</div></form-row>
<form-row label="Comment" h="44"><div class="i"></div></form-row>
<form-row label="Scan Targets" h="44"><select-box w="520" style="letter-spacing:.08px">Target for immediate scan of IP 10.0.2.15</select-box><ui-icon name="new" w="32" h="32" style="margin:1px 0 0 10px"></ui-icon></form-row>
<form-row label="Alerts" h="44"><select-box w="520" off></select-box><ui-icon name="new" w="32" h="32" style="margin:1px 0 0 10px"></ui-icon></form-row>
<form-row label="Schedule" h="44"><select-box w="402">--</select-box><ui-icon name="check" w="28" h="28" style="margin-left:20px"></ui-icon><span style="width:73px;margin-left:9px">Once</span><ui-icon name="new" w="32" h="32" style="margin-top:1px"></ui-icon></form-row>
<form-row label="Add results to&#10;Assets" h="60"><radio-option on w="100">Yes</radio-option><radio-option>No</radio-option></form-row>
<form-row label="Apply Overrides" h="30"><radio-option on w="100">Yes</radio-option><radio-option>No</radio-option></form-row>
<form-row label="Min QoD" h="52"><spin-box h="52">70</spin-box><span style="margin-left:1px">%</span></form-row>
<form-row label="Alterable Task" h="30"><radio-option w="100">Yes</radio-option><radio-option on>No</radio-option></form-row>
<form-row label="Auto Delete&#10;Reports" h="80"><div class="c"><div class="r" style="height:30px"><radio-option on>Do not automatically delete reports</radio-option></div><div class="r" style="height:50px"><radio-option>Automatically delete oldest reports but always keep newest</radio-option><spin-box h="50" off style="margin:0 10px 0 9px;width:156px">5</spin-box>reports</div></div></form-row>
<form-row label="Scanner" h="44"><select-box w="360">OpenVAS Default</select-box></form-row>
<form-row label="Scan Config" h="44"><select-box w="360" off></select-box></form-row>
</form>`);

define('form-row', `
:host{display:flex;align-items:center;flex:none}
label{width:235px;margin-right:41px;flex:none;text-align:right;font-weight:bold;white-space:pre-line}
:host([h="44"]) label{padding-bottom:1px}
div{flex:1;display:flex;align-items:center}`,
`<label></label><div><slot></slot></div>`,
(h, r) => { r.querySelector('label').textContent = h.getAttribute('label'); h.style.height = h.getAttribute('h') + 'px'; });

define('select-box', `
:host{display:flex;align-items:center;height:44px;border:2px solid #bfbfbf;border-radius:4px;background:#fff;padding:0 21px 0 9px}
:host([off]){background:#f2f2f2}
span{flex:1;overflow:hidden;white-space:nowrap;margin-right:8px}`,
`<span><slot></slot></span><ui-icon name="down" w="16" h="17" style="margin-top:1px"></ui-icon>`,
(h) => h.style.width = h.getAttribute('w') + 'px');

define('radio-option', `
:host{display:flex;align-items:center;padding-left:10px;white-space:nowrap}
i{width:28px;height:28px;border-radius:50%;border:4px solid #8f8f9d;margin-right:9px;flex:none;margin-top:-2px;background:#fff}
:host([on]) i{border-color:#a000a0;background:radial-gradient(circle,#a000a0 0 6px,#fff 7px)}`,
`<i></i><slot></slot>`,
(h) => { if (h.hasAttribute('w')) h.style.width = h.getAttribute('w') + 'px'; });

define('spin-box', `
:host{display:flex;flex:none;width:154px;border:2px solid #bfbfbf;border-radius:4px;background:#fff;font-size:29px;overflow:hidden}
.v{flex:1;padding-left:11px;display:flex;align-items:center;border-right:2px solid #4d4d4d}
.b{width:30px;background:#e5e5e5;color:#7f7f7f;display:flex;flex-direction:column;align-items:center;justify-content:center;gap:14px}
:host([off]){color:#e5e5e5}:host([off]) .b{background:#f2f2f2;color:#dfdfdf}`,
`<div class="v"><slot></slot></div><div class="b"><ui-icon name="up" w="9" h="10"></ui-icon><ui-icon name="down" w="9" h="10"></ui-icon></div>`,
(h) => h.style.height = h.getAttribute('h') + 'px');

define('vm-status', `
:host{display:flex;height:54px;flex:none;align-items:center;justify-content:flex-end;gap:10px;background:#2d2d2d;border-top:1px solid #6b6b6b;padding:1px 24px 0 0;font:25px/32px Inter,"DejaVu Sans",sans-serif;color:#fff}
fit-text{margin-left:1px}`,
[1,2,3,4,5,6,7,8,9,10,11].map(n => `<ui-icon name="s${n}" w="32" h="32"></ui-icon>`).join('') + `<fit-text w="142">Izquierda ⌘</fit-text>`);

define('ui-icon', `:host{display:block;flex:none}svg{display:block;overflow:visible}`, ``, (h, r) => {
  const [vb, body] = ICONS[h.getAttribute('name')], w = h.getAttribute('w'), ht = h.getAttribute('h');
  r.innerHTML += `<svg width="${w}" height="${ht}" viewBox="${vb}" preserveAspectRatio="none">${body}</svg>`;
});

/* Spaces its letters so that the run takes exactly the width in "w". */
define('fit-text', `:host{display:inline-block;white-space:nowrap;flex:none}`, `<slot></slot>`, h => {
  const want = +h.getAttribute('w'), have = h.getBoundingClientRect().width;
  h.style.letterSpacing = (want - have) / h.textContent.length + 'px';
});
</script>
</body>
</html>
